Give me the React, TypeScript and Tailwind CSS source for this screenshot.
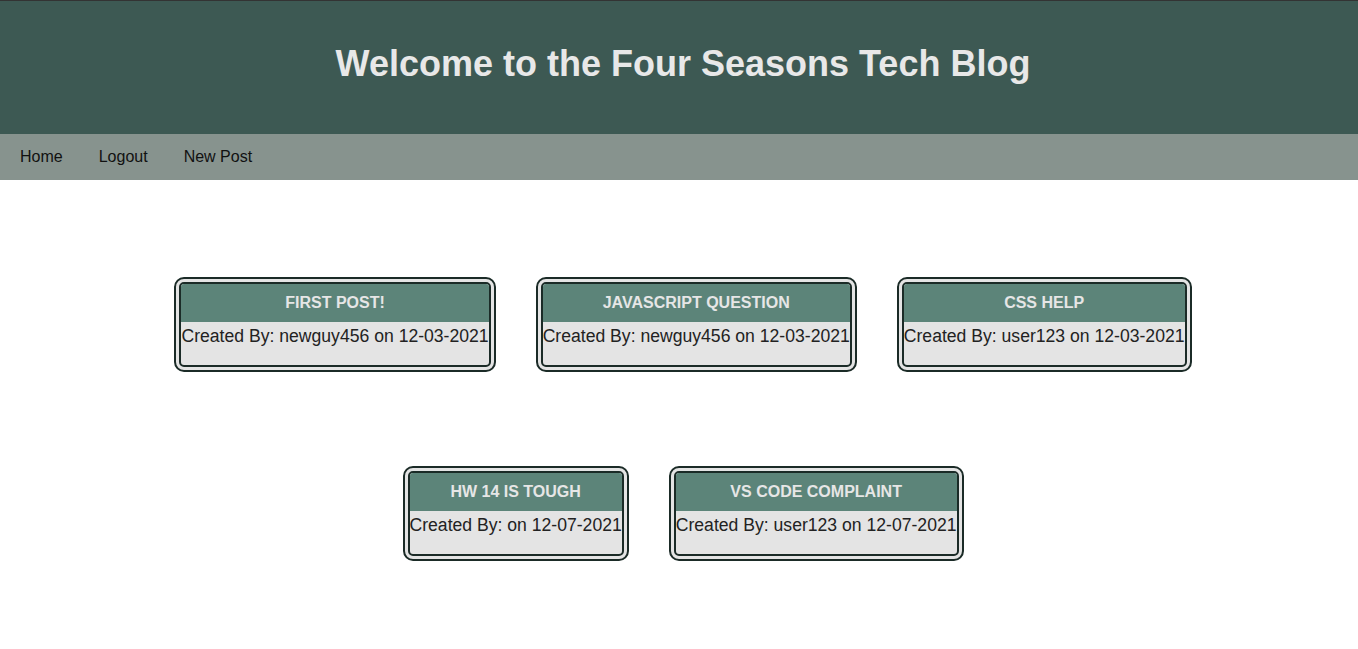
const posts = [
  { title: 'First Post!', author: 'newguy456', date: '12-03-2021' },
  { title: 'Javascript Question', author: 'newguy456', date: '12-03-2021' },
  { title: 'CSS Help', author: 'user123', date: '12-03-2021' },
  { title: 'HW 14 is tough', author: '', date: '12-07-2021' },
  { title: 'VS Code Complaint', author: 'user123', date: '12-07-2021' },
];

function PostCard({ title, author, date }: { title: string; author: string; date: string }) {
  return (
    <div className="overflow-hidden rounded-[10px] border-[7px] border-double border-[#1b2b27] bg-[#e4e4e4]">
      <h2 className="flex h-[38px] items-center justify-center bg-[#5c8479] text-[16px] font-bold uppercase text-[#e6e6e6]">
        {title}
      </h2>
      <p className="whitespace-nowrap pt-[4px] pb-[18px] text-[17.6px] leading-[21px] text-[#222]">
        Created By: {author ? `${author} ` : ''}on {date}
      </p>
    </div>
  );
}

export default function App() {
  return (
    <div className="min-h-screen bg-white font-['Liberation_Sans',Arial,sans-serif]">
      <header className="flex h-[134px] items-center justify-center border-t border-[#333] bg-[#3d5953] pb-2 pl-2">
        <h1 className="text-[36px] font-bold text-[#e8e8e8]">Welcome to the Four Seasons Tech Blog</h1>
      </header>

      <nav className="flex h-[46px] items-center bg-[#87938e] pl-[2px] text-[16px] text-[#111]">
        <a className="px-[18px]" href="#">Home</a>
        <a className="px-[18px]" href="#">Logout</a>
        <a className="px-[18px]" href="#">New Post</a>
      </nav>

      <main className="pl-2 pt-[97px]">
        <div className="mx-auto flex max-w-[1150px] flex-wrap justify-center gap-x-10 gap-y-[94px]">
          {posts.map((post) => (
            <PostCard key={post.title} {...post} />
          ))}
        </div>
      </main>
    </div>
  );
}
